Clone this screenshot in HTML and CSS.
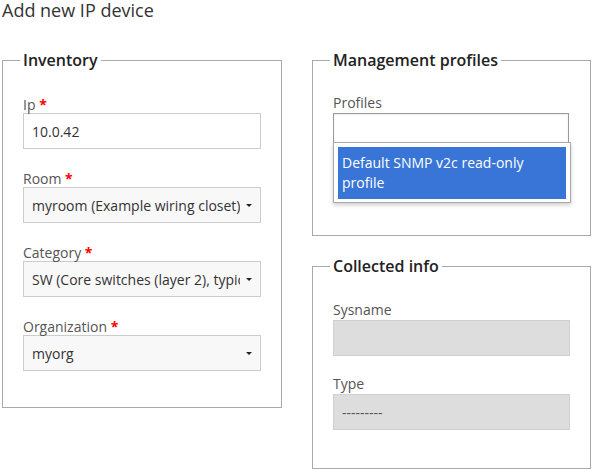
FILE: index.html
```html
<!DOCTYPE html>
<html lang="en">

<head>
  <meta charset="UTF-8" />
  <meta name="viewport" content="width=device-width, initial-scale=1.0" />
  <title>Add new IP device</title>
  <link rel="stylesheet" href="styles.css">
</head>

<body>
  <h1 class="page-title">Add new IP device</h1>

  <form class="device-form">
    <!-- left column -->
    <fieldset class="box">
      <legend>Inventory</legend>
      <div class="field">
        <label>Ip <span class="req">*</span></label>
        <input class="text-input" type="text" value="10.0.42" />
      </div>
      <div class="field">
        <label>Room <span class="req">*</span></label>
        <div class="select">
          <span class="select-text">myroom (Example wiring closet)</span>
          <span class="select-arrow"></span>
        </div>
      </div>
      <div class="field">
        <label>Category <span class="req">*</span></label>
        <div class="select">
          <span class="select-text">SW (Core switches (layer 2), typically with many ports)</span>
          <span class="select-arrow"></span>
        </div>
      </div>
      <div class="field">
        <label>Organization <span class="req">*</span></label>
        <div class="select">
          <span class="select-text">myorg</span>
          <span class="select-arrow"></span>
        </div>
      </div>
    </fieldset>

    <!-- right column -->
    <div class="side">
      <fieldset class="box box-side">
        <legend>Management profiles</legend>
        <div class="field field-profiles">
          <label>Profiles</label>
          <div class="multi"></div>
          <ul class="multi-results">
            <li class="highlighted">Default SNMP v2c read-only profile</li>
          </ul>
        </div>
      </fieldset>

      <fieldset class="box box-side box-info">
        <legend>Collected info</legend>
        <div class="field">
          <label>Sysname</label>
          <input class="text-input" type="text" value="" disabled />
        </div>
        <div class="field">
          <label>Type</label>
          <input class="text-input" type="text" value="---------" disabled />
        </div>
      </fieldset>
    </div>
  </form>
</body>

</html>
```

FILE: styles.css
```css
* {
  box-sizing: border-box;
}

body {
  margin: 0;
  padding: 0 2px;
  font-family: "Open Sans", "Liberation Sans", sans-serif;
  font-size: 14px;
  color: #333;
  background: #fff;
}

.page-title {
  margin: 0 0 29px 0;
  font-size: 18px;
  line-height: 20px;
  font-weight: 400;
  color: #333;
}

.device-form {
  display: grid;
  grid-template-columns: 280px 279px;
  column-gap: 30px;
  align-items: start;
}

.side {
  display: flex;
  flex-direction: column;
  gap: 19px;
}

.box {
  margin: 0;
  padding: 25px 20px 15px 20px;
  border: 1px solid #aaa;
  min-width: 0;
}

.box legend {
  padding: 0 3px;
  margin-left: -3px;
  font-size: 16px;
  line-height: 22px;
  font-weight: 600;
  color: #222;
}

.box-side {
  padding-top: 23px;
  padding-bottom: 17px;
}

.box-info {
  padding-top: 24px;
  padding-bottom: 19px;
}

.field {
  margin-bottom: 21px;
}

.field label {
  display: block;
  line-height: 17px;
  color: #555;
}

.box-side .field {
  margin-bottom: 19px;
}

.box-side .field label {
  margin-bottom: 2px;
}

.req {
  color: #f00;
  font-weight: 700;
}

.text-input {
  display: block;
  width: 100%;
  height: 36px;
  margin: 0;
  padding: 0 8px;
  border: 1px solid #ccc;
  background: #fff;
  font-family: inherit;
  font-size: 14px;
  color: #333;
}

.text-input:disabled {
  background: #ddd;
  border-color: #d0d0d0;
  color: #555;
}

.select {
  display: flex;
  align-items: center;
  height: 36px;
  padding: 0 8px 0 8px;
  border: 1px solid #ccc;
  background: #f8f8f8;
  color: #333;
}

.select-text {
  flex: 1;
  overflow: hidden;
  white-space: nowrap;
}

.select-arrow {
  width: 0;
  height: 0;
  margin-left: 6px;
  border-left: 3px solid transparent;
  border-right: 3px solid transparent;
  border-top: 3px solid #222;
}

/* profiles widget */
.box-side .field-profiles {
  margin-bottom: 15px;
}

.multi {
  width: 236px;
  height: 30px;
  border: 1px solid #999;
  background: #fff;
  box-shadow: inset 0 1px 2px rgba(0, 0, 0, 0.08);
}

.multi-results {
  list-style: none;
  margin: -1px 0 0 0;
  padding: 4px 4px 3px 4px;
  width: 238px;
  border: 1px solid #aaa;
  background: #fff;
  box-shadow: 0 2px 4px rgba(0, 0, 0, 0.2);
}

.multi-results li {
  padding: 6px 4px;
  line-height: 20px;
}

.multi-results li.highlighted {
  background: #3875d7;
  color: #fff;
}
```
